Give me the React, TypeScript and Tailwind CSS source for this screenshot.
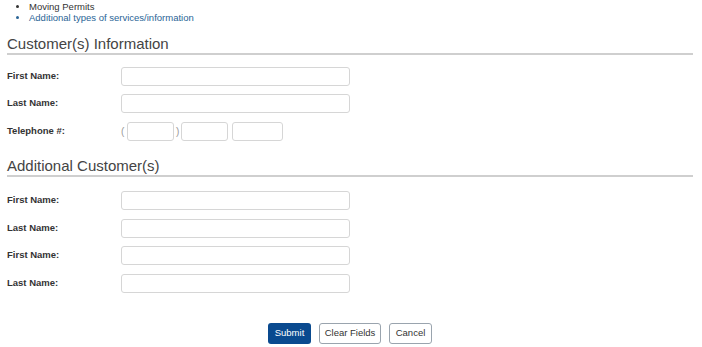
const font = { fontFamily: '"Liberation Sans", Arial, sans-serif' };

function Field({ label }: { label: string }) {
  return (
    <div className="flex h-[19px] items-center">
      <label className="w-[114px] text-[9.5px] font-bold text-[#333]">{label}</label>
      <input className="h-[19px] w-[229px] rounded-[3px] border border-[#d6d6d6] bg-white outline-none" />
    </div>
  );
}

function Heading({ children }: { children: React.ReactNode }) {
  return (
    <h2 className="border-b-2 border-[#cfcfcf] pb-[1px] text-[15px] leading-[17px] text-[#444]">{children}</h2>
  );
}

export default function App() {
  return (
    <div className="h-[347px] w-[702px] overflow-hidden bg-white pl-[7px] pr-[9px]" style={font}>
      <ul className="list-disc pl-[22px] pt-[1px] text-[9.5px] leading-[11px] text-[#333]">
        <li>Moving Permits</li>
        <li className="text-[#2a6496]">Additional types of services/information</li>
      </ul>

      <div className="mt-[12px]">
        <Heading>Customer(s) Information</Heading>
      </div>
      <div className="mt-[12px] flex flex-col gap-[8px]">
        <Field label="First Name:" />
        <Field label="Last Name:" />
        <div className="mt-[1px] flex h-[19px] items-center">
          <label className="w-[114px] text-[9.5px] font-bold text-[#333]">Telephone #:</label>
          <span className="w-[6px] text-[10px] text-[#999]">(</span>
          <input className="h-[19px] w-[47px] rounded-[3px] border border-[#d6d6d6] outline-none" />
          <span className="w-[7px] pl-[2px] text-[10px] text-[#999]">)</span>
          <input className="h-[19px] w-[47px] rounded-[3px] border border-[#d6d6d6] outline-none" />
          <input className="ml-[4px] h-[19px] w-[51px] rounded-[3px] border border-[#d6d6d6] outline-none" />
        </div>
      </div>

      <div className="mt-[16px]">
        <Heading>Additional Customer(s)</Heading>
      </div>
      <div className="mt-[14px] flex flex-col gap-[8.5px]">
        <Field label="First Name:" />
        <Field label="Last Name:" />
        <Field label="First Name:" />
        <Field label="Last Name:" />
      </div>

      <div className="mt-[30px] flex justify-center gap-[8px] text-[9.5px]">
        <button className="h-[21px] w-[43px] rounded-[3px] bg-[#0a4a8f] text-white">Submit</button>
        <button className="h-[21px] w-[62px] rounded-[3px] border border-[#9aa4ae] bg-white text-[#333]">Clear Fields</button>
        <button className="h-[21px] w-[43px] rounded-[3px] border border-[#9aa4ae] bg-white text-[#333]">Cancel</button>
      </div>
    </div>
  );
}
